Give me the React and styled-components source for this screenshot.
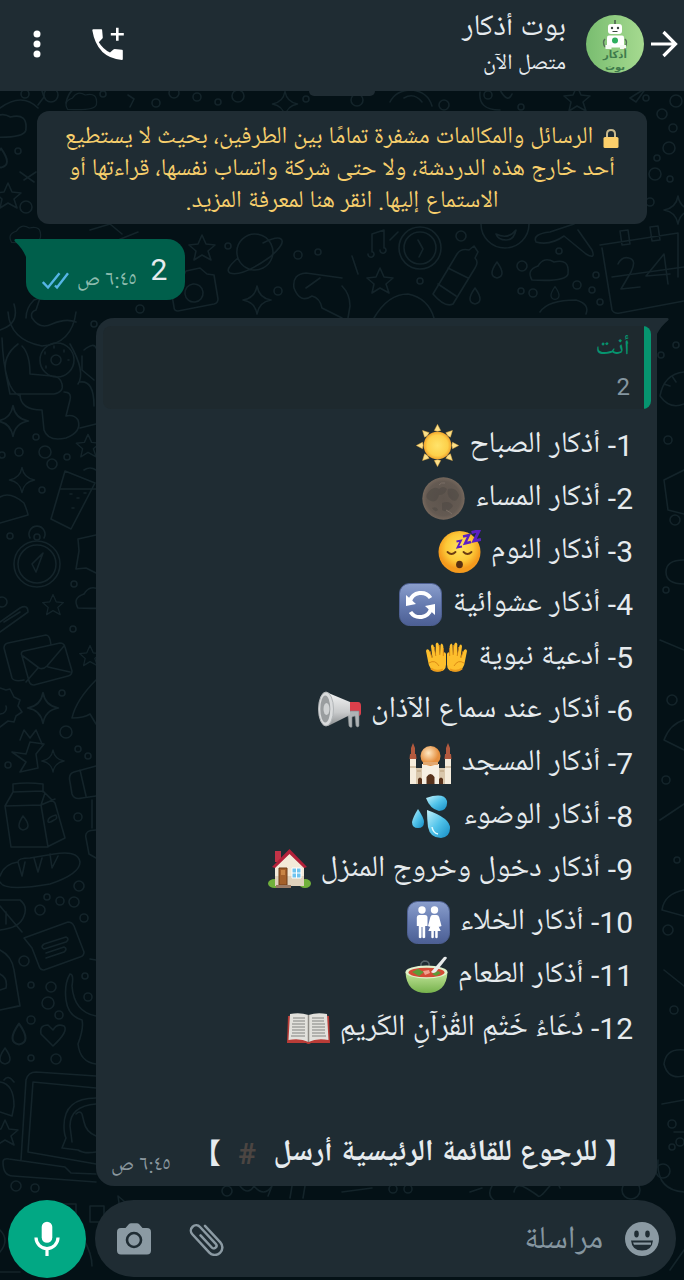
import React from "react";
import styled, { createGlobalStyle } from "styled-components";

const font = `Roboto, "Noto Naskh Arabic UI", "Noto Naskh Arabic", "Noto Sans Arabic", "DejaVu Sans", sans-serif`;

const c = {
  bar: "#1f2c33",
  wall: "#041116",
  doodle: "#14242a",
  quote: "#1e292e",
  out: "#005f4b",
  accent: "#02a884",
  quoteBar: "#06946f",
  text: "#e6ebee",
  muted: "#8596a0",
  notice: "#f7cf6c",
};

const GlobalStyle = createGlobalStyle`
  * { box-sizing: border-box; }
  body { margin: 0; background: ${c.wall}; font-family: ${font}; color: ${c.text}; }
`;

const Page = styled.div`
  position: relative;
  isolation: isolate;
  display: flex;
  flex-direction: column;
  min-height: 100vh;
  overflow: hidden;
`;

const WallpaperArt = styled.svg`
  position: absolute;
  inset: 0;
  z-index: -1;
  width: 100%;
  height: 100%;
`;

const Header = styled.header`
  display: flex;
  align-items: center;
  min-height: 91px;
  padding: 0 6px 4px 22px;
  background: ${c.bar};
`;

const IconButton = styled.button`
  display: flex;
  align-items: center;
  justify-content: center;
  flex: none;
  width: ${(p) => p.$w || 34}px;
  height: ${(p) => p.$h || 40}px;
  padding: 0;
  border: 0;
  background: none;
  color: ${(p) => p.$color || "#fff"};
  cursor: pointer;
`;

const Avatar = styled.svg`
  flex: none;
  width: 58px;
  height: 58px;
  margin-inline: 6px 20px;
`;

const Contact = styled.div`
  flex: 1;
  min-width: 0;
  padding-top: 2px;
`;

const Name = styled.h1`
  margin: 0;
  font-size: 30px;
  font-weight: 400;
  line-height: 40px;
`;

const Status = styled.p`
  margin: 0;
  font-size: 22px;
  line-height: 32px;
`;

const Actions = styled.div`
  display: flex;
  align-items: center;
  gap: 39px;
`;

const Chat = styled.main`
  flex: 1;
  display: flex;
  flex-direction: column;
`;

const DateChip = styled.div`
  align-self: center;
  width: 66px;
  height: 5px;
  border-radius: 0 0 12px 12px;
  background: ${c.bar};
`;

const Notice = styled.p`
  margin: 15px 37px 0;
  padding: 11px 20px 6px;
  border-radius: 12px;
  background: ${c.bar};
  color: ${c.notice};
  font-size: 24px;
  line-height: 32px;
  text-align: center;
`;

const NoticeLine = styled.span`
  display: block;
  white-space: nowrap;
`;

const LockIcon = styled.svg`
  width: 16px;
  height: 20px;
  margin-inline-end: 4px;
  vertical-align: -3px;
`;

const Sent = styled.section`
  position: relative;
  align-self: flex-end;
  display: flex;
  align-items: center;
  height: 61px;
  margin: 15px 0 0 26px;
  padding: 0 18px 0 16px;
  border-radius: 18px;
  border-top-left-radius: 0;
  background: ${c.out};
`;

const Tail = styled.svg`
  position: absolute;
  top: 0;
  ${(p) => (p.$side === "left" ? "left: -12px" : "right: -12px")};
  width: 13px;
  height: 18px;
`;

const Meta = styled.div`
  display: flex;
  align-items: center;
  gap: 8px;
  color: ${(p) => p.$color || "#8a979e"};
  font-size: 21px;
  line-height: 26px;
`;

const SentText = styled.p`
  margin: 0 0 0 14px;
  font-size: 30px;
  line-height: 32px;
`;

const SentMeta = styled(Meta)`
  align-self: flex-end;
  padding-bottom: 6px;
`;

const Received = styled.section`
  position: relative;
  margin: 18px 27px 0 96px;
  padding: 8px 6px 0 7px;
  border-radius: 18px;
  border-top-right-radius: 0;
  background: ${c.bar};
`;

const Quote = styled.blockquote`
  display: flex;
  height: 83px;
  margin: 0;
  border-radius: 8px;
  overflow: hidden;
  background: ${c.quote};
`;

const QuoteBar = styled.span`
  width: 7px;
  background: ${c.quoteBar};
`;

const QuoteBody = styled.div`
  padding: 4px 14px 0 0;
  font-size: 24px;
  line-height: 38px;
  color: ${c.muted};
`;

const QuoteAuthor = styled.div`
  color: ${c.quoteBar};
  font-size: 26px;
`;

const List = styled.ul`
  margin: 10px 0 0;
  padding: 0 18px 0 0;
  list-style: none;
`;

const Item = styled.li`
  display: flex;
  align-items: center;
  gap: 10px;
  height: 53px;
  line-height: 53px;
  font-size: 30px;
  white-space: nowrap;
`;

const Emoji = styled.svg`
  flex: none;
  width: 43px;
  height: 43px;
`;

const Foot = styled.div`
  display: flex;
  align-items: flex-end;
  justify-content: space-between;
  margin-top: 74px;
  padding: 0 18px 7px 8px;
`;

const FootText = styled.p`
  margin: 0;
  font-size: 30px;
  font-weight: 700;
  line-height: 50px;
  white-space: nowrap;
`;

const Bracket = styled.span`
  font-family: "Noto Sans CJK SC", sans-serif;
  font-size: 28px;
  line-height: 32px;
`;

const Hash = styled.span`
  margin-inline: 10px;
  color: #4b4542;
`;

const Composer = styled.form`
  display: flex;
  align-items: flex-start;
  gap: 9px;
  margin-top: 14px;
  padding: 0 8px 2px;
`;

const Field = styled.div`
  flex: 1;
  min-width: 0;
  display: flex;
  align-items: center;
  height: 77px;
  padding: 0 17px 0 22px;
  border-radius: 39px;
  background: ${c.bar};
`;

const TextInput = styled.input`
  flex: 1;
  min-width: 0;
  height: 60px;
  margin: 0;
  padding: 4px 21px 0;
  border: 0;
  outline: 0;
  background: none;
  color: ${c.text};
  font: 400 32px ${font};
  &::placeholder { color: ${c.muted}; opacity: 1; }
`;

const MicButton = styled(IconButton)`
  border-radius: 50%;
  background: ${c.accent};
`;

const FieldActions = styled.div`
  display: flex;
  gap: 38px;
`;

/* ---------- wallpaper ---------- */

const star = "M0-13 4-4 13-3 6 3 9 12 0 7-8 12-6 3-13-3-4-4Z";
const spark = "M0-14Q2-2 14 0 2 2 0 14-2 2-14 0-2-2 0-14Z";
const drop = "M0-8Q10 6 0 8-10 6 0-8Z";
const cloud = "M-18 8Q-24-2-12-6-6-16 4-10 20-14 18 2 16 10-18 8Z";
const heart = "M0 11-12-1Q-14-10-5-10L0-5Q4-12 11-9 16-4 0 11Z";

const shapes = [
  [star, 8, 196, 1], [star, 202, 248, 1], [star, 380, 281, 1], [star, 577, 99, 1], [star, 53, 605, 0.8],
  [star, 88, 446, 0.9], [star, 5, 1133, 1], [star, 90, 656, 0.8],
  [spark, 257, 300, 1], [spark, 13, 421, 1.1], [spark, 43, 708, 1.1], [spark, 53, 761, 0.8], [spark, 678, 210, 1],
  [spark, 285, 104, 0.9], [spark, 22, 480, 0.9],
  [drop, 497, 270, 1], [drop, 475, 296, 1], [drop, 555, 293, 0.8], [drop, 19, 1034, 1.3], [drop, 5, 1056, 1], [drop, 1, 158, 1.2],
  [cloud, 550, 272, 1], [cloud, 82, 103, 0.8], [cloud, 6, 128, 1.1], [cloud, 96, 600, 1], [cloud, 26, 236, 0.8],
  [heart, 53, 1035, 1],
];

const rings = [
  [25, 94, 4], [51, 95, 7], [103, 94, 3], [156, 103, 4], [174, 93, 5], [197, 97, 4], [218, 102, 3], [238, 96, 6],
  [306, 99, 3], [357, 100, 6], [444, 105, 5], [488, 95, 4], [521, 107, 3], [646, 98, 3], [676, 101, 6],
  [662, 114, 5], [673, 128, 4], [669, 148, 6], [657, 158, 3], [655, 174, 6], [670, 179, 3], [650, 202, 4],
  [26, 207, 6], [18, 151, 3], [228, 246, 3], [298, 255, 4], [318, 252, 3], [278, 291, 4], [140, 309, 4], [94, 324, 3],
  [461, 236, 5], [559, 251, 3], [522, 266, 5], [420, 281, 3], [521, 291, 3], [533, 293, 4], [577, 285, 4], [596, 275, 3],
  [600, 302, 3], [592, 290, 3], [36, 437, 3], [45, 452, 6], [19, 452, 4], [52, 464, 5], [67, 457, 3], [42, 490, 3],
  [2, 455, 3], [10, 536, 3], [2, 602, 5], [74, 584, 3], [73, 629, 3], [62, 693, 3], [66, 732, 6], [8, 765, 3],
  [78, 749, 3], [88, 756, 3], [78, 817, 4], [79, 886, 5], [74, 902, 5], [60, 901, 4], [47, 897, 3], [40, 910, 5],
  [84, 918, 4], [24, 961, 5], [31, 985, 3], [51, 987, 5], [48, 1003, 6], [59, 1015, 4], [31, 1020, 4], [31, 1058, 3],
  [56, 1059, 5], [85, 976, 3], [88, 997, 4], [16, 1186, 5], [35, 1188, 4], [227, 1191, 5], [393, 1189, 4], [408, 1189, 4],
  [672, 1124, 4], [680, 1142, 4], [663, 1171, 7], [672, 1147, 3], [661, 355, 3], [676, 345, 3], [668, 440, 4],
  [675, 520, 5], [666, 590, 3], [672, 700, 5], [666, 780, 4], [677, 860, 3], [668, 930, 5], [674, 1010, 4], [631, 1190, 9],
];

const lines = [
  /* planet and ring */
  "M237 254a18 18 0 1 1 34 6a18 18 0 0 1-34-6M238 258q-14 12-8 15 12 4 40-16 16-14 11-18-4-3-18 4",
  /* camera */
  "M170 284l12-5 4-8 14-3 7 6 7 1 4 24q0 4-4 5l-36 7q-4 0-4-4z", "M185 294a9 9 0 1 0 18-2a9 9 0 1 0-18 2",
  /* leaf and guitar */
  "M294 288q-2-14 12-15l36 5M294 288q6 16 18 8 8 2 10 12l20 10M306 288l14-10M118 240l20-8M90 230l20-6 12 10",
  /* music notes */
  "M372 252v-18l12-4v18M368 254a3 3 0 1 0 5-2M380 250a3 3 0 1 0 5-2",
  /* clock */
  "M399 248a21 21 0 1 0 42 0a21 21 0 1 0-42 0M404 248a16 16 0 1 0 32 0a16 16 0 1 0-32 0M418 240l5 9-4 8",
  /* bottle */
  "M433 294l24-40q4-6 12-4l5-4 4 6-3 6q4 4 0 10l-22 36q-8 4-20-10zM448 268l20 10M438 284l18 12",
  /* laughing face */
  "M481 224a24 24 0 0 0 48 0M496 234q12 6 20-4-2 10-10 10-8 0-10-6z",
  /* plane */
  "M536 242q-4-8 14-10l24-8M536 242q14 4 28-6l22 18q10 6 6-4l-14-20",
  /* calendar */
  "M600 245l78-12v44M602 248l10 62q2 4 8 3l64-12M612 277l72-10M620 231l8-1 2 14-8 1zM650 227l8-1 2 14-8 1z",
  "M618 264q4-8 11-6 8 2 2 14l-10 17 19-2M668 284l-4-30-18 22 24-2",
  /* hills and hats over the bubble */
  "M374 318q14-24 34-24 20 4 26 24M540 312q8-12 36-12 14 4 10 14M342 286q8 8 8 20l-2 12M352 256l6 18M398 232l-8 8",
  /* bear */
  "M8 312q2 28 34 34 30-2 34-34M0 330q20-6 14-26M26 318q0-10 8-18l6-2-4 12q-6 2-4 8 8 12 20 6 14-6 24-2",
  "M40 360a17 17 0 1 0 34 0a17 17 0 1 0-34 0M51 360a5 5 0 1 0 10 0a5 5 0 1 0-10 0M45 352v2M54 346v2M64 350v2M68 360h1M46 366v2",
  "M18 344q-16 12-12 30l4 20 44 0q10-2 8-10-2-8-10-8l-22-2q0-20-8-28M2 338q2 52 18 58M20 394q0 16 22 16l2 20q4 12 22 8 16-6 12-18-4-6-12-4l4-16q2-8-6-8",
  "M70 344q16 28 8 40M80 382q14-2 14 24M84 350q10-8 12-2M82 356v14l12 10M80 428l16-4",
  /* cup */
  "M65 471 51 519l20 10 24-46zM60 489h36M70 494h2M77 498h2M84 493h2M72 508h2M84 470q6-4 12 0",
  /* compass */
  "M14 564a23 23 0 1 0 46 0a23 23 0 1 0-46 0M18 564a19 19 0 1 0 38 0a19 19 0 1 0-38 0M43 553 36 572 32 564zM30 538a8 8 0 1 1 14 0",
  "M34 537a3 3 0 1 0 6 0a3 3 0 1 0-6 0M0 497q10-6 24 6 4 10 4 12l-28 8",
  /* puzzle, cloud */
  "M96 535l-18 4 1 12-3 18 10-1 10 5M0 622l20-14q8-4 8 4l-28 20M4 622l16-10",
  /* envelopes */
  "M4 648q0-4 4-5l38-8q4 0 5 10M4 648l8 30q2 4 12 2M22 656q-2-4 2-5l36-8q4 0 5 4l7 24q0 4-4 5l-34 9q-4 0-5-4zM23 656l16 12q4 2 8-2l17-20M26 682l12-14M70 672l-22-5",
  /* gear, rocket */
  "M0 688l6 2 4-1 4 8 6 3-2 6 4 6-6 4-2 6-6-1-8 6M6 706a6 6 0 0 1-6 8M96 680q-20 20-24 38 12 0 18-4l6 10M20 740l4-10 6 8 6-8 6 14",
  /* windmill, robot */
  "M12 752l14 2 4-12 14 2-8 10 2 14-18 4 6-10zM96 766l-22 6q-6 2-4 10l2 12q2 6 10 4l14-2M80 770l6 26M96 830q-12 0-10 8l3 16 7 4M92 800v28",
  /* milk carton */
  "M5 806l8-14 30-1 12 12 10 35-18 9-36 0zM5 806l36-1 14-6M41 805l7 42M13 792v-8q14-2 30 0v8M41 805l4-12M48 821q0-4 8-6 2 4-2 5-6 4-6 1M23 816q10 12 0 14-8-2 0-14",
  /* bread */
  "M0 876q4-12 18-14 0-4 12-4l24-4q24-4 26 8 0 12-30 22-46 8-50-2M18 862l4 14 3-14M34 858l4 14 4-14M50 854l2 14 6-12",
  /* fish */
  "M0 900l20 0q8 6 4 16-4 12-24 14M0 906l22 26M6 924l0-12",
  /* ticket */
  "M24 938l44-16q4 0 6 4l10 26q0 4-4 5l-36 13q-4 0-5-4l-7-18zM44 944l22-7q4 2 0 5l-22 7q-4-2 0-5M46 953l18-6q4 2 0 5l-18 6",
  /* jar, boot */
  "M0 950q12 6 14 20l6 36-20 4M0 1010l18-4M0 974q8 4 6 14l-6 2M70 974q-6 10-4 26 2 16 16 20 2 8-4 24 2 18 18 20M70 974q4 0 2 12 2 26 24 30M96 960l-6-1",
  /* laptop */
  "M21 1160l5-80q2-8 10-8l60 4M28 1152l5-70 63 6M28 1152l68 12M3 1162q0-4 6-3l56 8 6 6 25 1M3 1162q0 14 10 14l83 6",
  "M96 1098q-32 0-32 28 0 8 2 12l-4 10 16 2q6 4 18 2M96 1104q-26 2-26 22l2 16M76 1114q4-4 6 0l2 8q2 10 12 14",
  "M0 1082q14 2 14 24l-2 10-12-4M4 1080q4-6 10 2",
  /* details under the bubble and around the composer */
  "M60 1204h16v18H60zM90 1206h14v16H90zM118 1196l14 12-12 2zM240 1186q8 10 14 0 10 12 18 0l-4 10M290 1198l2-12M303 1198l2-12M342 1192l30-4M470 1192l12-4M492 1186q-6 10 4 16M514 1192q2-10 12-4t12 8 10-8 12 0",
  "M658 1160q-2 30 26 32M684 1132h-10M662 1104l22-4M0 1230q10 10 0 22M84 1240q8 14 8 26M0 1272h20M670 1270l14-20",
  /* right margin */
  "M684 372q-20 2-24 24 10 14 24 8M664 384l6 2M672 376l4 6M684 470l-20 10 4 30 16 4M684 560q-18 0-18 12t18 12M660 640l24 10M684 720q-14 4-20 20l20 10M660 820l24-16M684 890q-20 4-22 20l22 6M664 970l20 16M684 1050q-18-2-20 14 4 16 20 12",
  "M38 105l6-8-2-6 12-6M66 103q2-10 8-14l16-2M20 172l14 10M24 180l12-8M0 108q22-16 38 0M130 107l4-8-6-4M390 102q6-12 22-12 16 2 20 16M404 98q10-6 18 4M480 92q-2 18 20 18M500 90q8 14 12 4M630 98l16-10-10 14z",
];

function Wallpaper() {
  return (
    <WallpaperArt viewBox="0 0 684 1280" preserveAspectRatio="xMidYMin slice" aria-hidden="true">
      <g fill="none" stroke={c.doodle} strokeWidth="1.6" strokeLinejoin="round" strokeLinecap="round">
        {shapes.map(([d, x, y, s], i) => (
          <path key={i} d={d} transform={`translate(${x} ${y}) scale(${s})`} />
        ))}
        {rings.map(([x, y, r], i) => (
          <circle key={i} cx={x} cy={y} r={r} />
        ))}
        {lines.map((d, i) => (
          <path key={i} d={d} />
        ))}
      </g>
    </WallpaperArt>
  );
}

/* ---------- emoji ---------- */

const Sun = () => (
  <>
    <defs>
      <radialGradient id="sun"><stop offset="0" stopColor="#ffe36a" /><stop offset=".75" stopColor="#fdd04a" /><stop offset="1" stopColor="#f2a52c" /></radialGradient>
    </defs>
    {[0, 45, 90, 135, 180, 225, 270, 315].map((a) => (
      <path key={a} d="M18.300 6.500 21.500.4l3.200 6.100q-3.200 1.400-6.400 0z" fill="#fbe08a" stroke="#e9b144" strokeWidth=".5" transform={`rotate(${a} 21.5 21.5)`} />
    ))}
    <circle cx="21.500" cy="21.500" r="13.800" fill="url(#sun)" />
  </>
);

const Moon = () => (
  <>
    <defs>
      <radialGradient id="moon"><stop offset="0" stopColor="#5d544d" /><stop offset=".8" stopColor="#645a52" /><stop offset="1" stopColor="#75675c" /></radialGradient>
    </defs>
    <circle cx="21.500" cy="21.500" r="21.200" fill="url(#moon)" />
    <path d="M5 17q6-9 12-5 4-4 8 0-2 6-8 6-2 8-8 6-6-2-4-7zM26 12q8-2 11 6-2 8-7 5-6-4-4-11zM20 26q8-3 11 3-5 8-11 4zM10 31q5-2 6 2-3 3-6-2z" fill="#4a4541" opacity=".45" />
    <path d="M24 33q4 2 6 4M17 8q2-3 6-2" stroke="#7b6f66" fill="none" />
  </>
);

const Sleep = () => (
  <>
    <defs>
      <radialGradient id="face" cy=".4"><stop offset="0" stopColor="#ffe45e" /><stop offset=".65" stopColor="#fdc938" /><stop offset="1" stopColor="#f49a1d" /></radialGradient>
    </defs>
    <circle cx="21.500" cy="22" r="21" fill="url(#face)" />
    <g fill="none" stroke="#6b3c12" strokeWidth="1.800" strokeLinecap="round"><path d="M9.500 22q4 4 8 0M25.500 22q4 4 8 0" /></g>
    <ellipse cx="21.500" cy="34.500" rx="3.400" ry="3.800" fill="#593011" />
    <g fill="none" stroke="#5b1fc4" strokeLinejoin="miter"><path d="M18.500 11.500 23 10.500 19.500 17.500 24 16.500" strokeWidth="1.800" /><path d="M25 6.500 31 5 27 13.500 33 12" strokeWidth="2.400" /><path d="M33.500 2.500 41 .8 36 11 43 9.500" strokeWidth="3" /></g>
  </>
);

const BlueTile = ({ id }) => (
  <>
    <defs>
      <linearGradient id={id} x2="0" y2="1"><stop offset="0" stopColor="#8b9fcd" /><stop offset=".5" stopColor="#667bb0" /><stop offset="1" stopColor="#4c5f94" /></linearGradient>
    </defs>
    <rect x=".5" y=".5" width="42" height="42" rx="10" fill={`url(#${id})`} stroke="#4e6092" />
  </>
);

const Cycle = () => (
  <>
    <BlueTile id="t1" />
    <g fill="none" stroke="#fff" strokeWidth="4"><path d="M11 18a11.500 11.500 0 0 1 20.500-3" /><path d="M32 26a11.500 11.500 0 0 1-20.500 3" /></g>
    <path d="M7 12v11l10-2zM36 32V21l-10 2z" fill="#fff" />
  </>
);

const Restroom = () => (
  <>
    <BlueTile id="t2" />
    <g fill="#fff">
      <circle cx="15" cy="9" r="3.700" /><circle cx="27.500" cy="9" r="3.700" />
      <path d="M12 14h6q2.500 0 2.500 2.500V25h-2.300v11.500q-1.300 1.500-2.700 0V26h-1v10.500q-1.300 1.500-2.700 0V25H9.800v-8.500Q9.800 14 12 14z" />
      <path d="M25.500 14h4q2 0 2.700 2.300L34.500 25l-2 .8h-.8l2 4.200h-3v6.500q-1.200 1.500-2.500 0V30h-1.400v6.500q-1.200 1.500-2.500 0V30h-3l2-4.200h-.8l-1.500-.8 2.300-8.700q.600-2.300 2.200-2.300z" />
    </g>
  </>
);

const Palms = () => {
  const hand = (
    <>
      <path d="M21 18Q20 15 18.500 17L18.300 10Q17 5.500 15.500 9L15 19 13.700 8Q12 5 10.700 8L11 20 8.500 9.500Q6.500 7 6 10.500L7.500 22 4 14Q1.500 12 1 15L3 25q1 10 9 10.500 9 .500 9-7z" fill="#fdbf2d" />
      <path d="M10.800 20 9.500 11M14.800 19 14.400 9M18.300 20l.1-8M7 22 5 15M4 27q6-4 10 3" fill="none" stroke="#d98412" strokeWidth=".9" />
      <path d="M6 32.500q5 4 12 1" stroke="#ec9c1c" strokeWidth="2" fill="none" />
    </>
  );
  return (
    <>
      {hand}
      <g transform="translate(43 0) scale(-1 1)">{hand}</g>
    </>
  );
};

const Horn = () => (
  <>
    <defs>
      <linearGradient id="horn" x2="0" y2="1"><stop offset="0" stopColor="#f4f5f5" /><stop offset=".6" stopColor="#c8cacb" /><stop offset="1" stopColor="#8b8e90" /></linearGradient>
    </defs>
    <path d="M30 13h10q3 0 3 4v7q0 3-3 3H30z" fill="#dd3f4b" />
    <path d="M30 27l1 10q1 2 3 1V28l3-1 1 10q2 2 3 0V22h-9z" fill="#aeb3b5" stroke="#7e8486" strokeWidth=".6" />
    <path d="M8 3l24 10v13L10 37z" fill="url(#horn)" />
    <ellipse cx="8" cy="20" rx="7.500" ry="17" fill="#dadcdd" stroke="#b1b5b7" />
    <ellipse cx="7.300" cy="20" rx="5" ry="13.500" fill="#999d9f" />
    <ellipse cx="8.500" cy="20" rx="3" ry="6" fill="#cfd2d3" />
  </>
);

const Mosque = () => (
  <>
    <defs>
      <radialGradient id="dome" cx=".4" cy=".35"><stop offset="0" stopColor="#ffe9c4" /><stop offset="1" stopColor="#e58f3f" /></radialGradient>
    </defs>
    <path d="M1 15h6v27H1zM36 15h6v27h-6z" fill="#f5ecdc" />
    <path d="M7 26h29v16H7z" fill="#d9c7ac" /><path d="M13 22h17v20H13z" fill="#f6efe2" />
    <path d="M2 6 4 1l2 5v6h1l.5 5H.5L1 12h1zM37 6l2-5 2 5v6h1l.5 5h-7l.5-5h1z" fill="#b2593e" />
    <circle cx="21.500" cy="14" r="10" fill="url(#dome)" />
    <path d="M14 20h15v3H14z" fill="#e2a870" />
    <path d="M17.500 42v-7q4-6 8 0v7zM9 42v-5q2-3 4 0v5zM30 42v-5q2-3 4 0v5z" fill="#58321b" />
    <path d="M1 25h6M36 25h6M8 29h4M31 29h4" stroke="#b79c79" />
  </>
);

const Drops = () => (
  <>
    <defs>
      <linearGradient id="drop" x2="1" y2="1"><stop offset="0" stopColor="#c5f2fb" /><stop offset=".5" stopColor="#51c3ea" /><stop offset="1" stopColor="#158cc4" /></linearGradient>
    </defs>
    <path d="M16 3Q34-3 37 6q1 9-8 10Q20 14 16 3z" fill="url(#drop)" />
    <path d="M17 15q23 8 23 18 0 9-9 10-11 0-13-11-1-8-1-17z" fill="url(#drop)" />
    <path d="M8 14q6 9 6 13 0 6-6 6t-6-6q1-5 6-13z" fill="url(#drop)" />
    <path d="M22 32q1 6 6 7" stroke="#e0fbff" strokeWidth="1.500" fill="none" />
  </>
);

const House = () => (
  <>
    <ellipse cx="7" cy="35.500" rx="7" ry="4.500" fill="#71b13c" /><ellipse cx="37" cy="35.500" rx="6" ry="4.500" fill="#71b13c" />
    <path d="M7 3h6v11H7z" fill="#c23347" />
    <path d="M7 18 22 4l14 14v20H7z" fill="#f3ead9" /><path d="M7 28h29v10H7z" fill="#dfd2bd" />
    <path d="M4 19 21.500 1 39 19l-3 1L21.500 6 7 20z" fill="#b3213a" />
    <path d="M11 20h8v17h-8z" fill="#a4602a" stroke="#6e3d18" /><path d="M13 22h4v5h-4z" fill="#c98545" />
    <path d="M24 20h9v10h-9z" fill="#70c4ef" stroke="#fff" /><path d="M28.500 20v10M24 25h9" stroke="#fff" />
    <path d="M8 37h15v3H8z" fill="#9a7a65" />
  </>
);

const Bowl = () => (
  <>
    <defs>
      <linearGradient id="bowl" x2="0" y2="1"><stop offset="0" stopColor="#c3e59b" /><stop offset="1" stopColor="#76b24c" /></linearGradient>
    </defs>
    <path d="M17 14q-3-5 2-7 6 0 5 5" stroke="#58656b" strokeWidth="1.500" fill="none" />
    <path d="M.5 18q1 21 21 21t21-21z" fill="url(#bowl)" />
    <ellipse cx="21.500" cy="18" rx="21" ry="6.500" fill="#e1f2cd" /><ellipse cx="21.500" cy="18.500" rx="18" ry="4.800" fill="#d34a35" />
    <path d="M7 18l6-3 6 3-5 4zM27 20l6-3 3 2-5 3z" fill="#5d9b37" /><path d="M18 17l6-1 1 3-5 2z" fill="#f0a08d" />
    <path d="M26 18 39 3q2-1 3 1L31 18q-3 2-5 0z" fill="#e8ebeb" />
  </>
);

const Book = () => (
  <>
    <path d="M1 9h41l1 27H24q-2.500 2-5 0H0z" fill="#b93c37" />
    <path d="M3 7q10-2 18.500 1Q30 5 40 7l1.500 26q-12-2-20 2-8-4-20-2z" fill="#e2e1dc" />
    <path d="M21.500 8v27" stroke="#8f8c86" strokeWidth="1.500" />
    <path d="M6 11h12M6 14h12M5 17h13M5 20h13M5 23h13M5 26h13M4 29h14M25 11h12M25 14h12M25 17h13M25 20h13M25 23h13M25 26h13M25 29h14" stroke="#a3a29e" strokeWidth="1.600" />
  </>
);

const items = [
  ["1", "أذكار الصباح", Sun],
  ["2", "أذكار المساء", Moon],
  ["3", "أذكار النوم", Sleep],
  ["4", "أذكار عشوائية", Cycle],
  ["5", "أدعية نبوية", Palms],
  ["6", "أذكار عند سماع الآذان", Horn],
  ["7", "أذكار المسجد", Mosque],
  ["8", "أذكار الوضوء", Drops],
  ["9", "أذكار دخول وخروج المنزل", House],
  ["10", "أذكار الخلاء", Restroom],
  ["11", "أذكار الطعام", Bowl],
  ["12", "دُعَاءُ خَتْمِ القُرْآنِ الكَريمِ", Book],
];

export default function App() {
  return (
    <Page dir="rtl" lang="ar">
      <GlobalStyle />
      <Wallpaper />
      <Header>
        <IconButton aria-label="رجوع" $w={28}>
          <svg width="28" height="28" viewBox="0 0 28 28" fill="none" stroke="currentColor" strokeWidth="3.200">
            <path d="M1 14h24.500M13.500 2l12 12-12 12" />
          </svg>
        </IconButton>
        <Avatar viewBox="0 0 58 58" role="img" aria-label="بوت أذكار">
          <defs>
            <linearGradient id="av"><stop offset="0" stopColor="#79bd70" /><stop offset="1" stopColor="#a6da90" /></linearGradient>
          </defs>
          <circle cx="29" cy="29" r="29" fill="url(#av)" />
          <path d="M29 5v5" stroke="#45584a" strokeWidth="1.500" />
          <path d="M19 24q-3 3 0 8M39 24q3 3 0 8" stroke="#547058" fill="none" strokeWidth="1.500" />
          <rect x="22" y="9" width="14" height="10" rx="3" fill="#fff" />
          <rect x="21" y="20.500" width="17" height="12" rx="2" fill="#fff" />
          <path d="M19.500 30h6v4h-6zM34 30h6v4h-6z" fill="#f4faf3" />
          <circle cx="26" cy="13" r="1.200" fill="#39463f" /><circle cx="32" cy="13" r="1.200" fill="#39463f" />
          <path d="M26.500 16.500h5" stroke="#39463f" />
          <circle cx="29" cy="25.500" r="3" fill="#2fae5f" />
          <g fill="#3f7a4c" fontFamily="DejaVu Sans, sans-serif" fontSize="10" fontWeight="700" textAnchor="middle"><text x="29" y="43">أذكار</text><text x="29" y="55">بوت</text></g>
        </Avatar>
        <Contact>
          <Name>بوت أذكار</Name>
          <Status>متصل الآن</Status>
        </Contact>
        <Actions>
          <IconButton aria-label="مكالمة">
            <svg width="34" height="34" viewBox="0 0 34 34">
              <path fill="currentColor" d="M2.300 2.300H10.500Q11 2.300 11.100 2.800L11.800 10.500Q11.800 11.200 11.400 11.600L7.800 15.200Q12 22 19 25.600L22.400 22.400Q23 22 23.600 22L31 22.800Q31.800 23 31.800 23.700V32Q31.800 33 31 33Q6 31 1.300 3.300Q1.300 2.300 2.300 2.300Z" />
              <path stroke="currentColor" strokeWidth="2.600" d="M26.300 .8v13M19.800 7.300h13" />
            </svg>
          </IconButton>
          <IconButton aria-label="المزيد" $w={30}>
            <svg width="8" height="28" viewBox="0 0 8 28" fill="currentColor">
              <circle cx="4" cy="4" r="3.500" /><circle cx="4" cy="14" r="3.500" /><circle cx="4" cy="24" r="3.500" />
            </svg>
          </IconButton>
        </Actions>
      </Header>
      <Chat>
        <DateChip />
        <Notice>
          <NoticeLine>
            <LockIcon viewBox="0 0 16 20">
              <path d="M4 9V5q0-4 4-4t4 4v4" fill="none" stroke="#c9b98c" strokeWidth="2" />
              <rect x=".5" y="8" width="15" height="11" rx="1.500" fill="#fdd06b" />
            </LockIcon>{" "}
            الرسائل والمكالمات مشفرة تمامًا بين الطرفين، بحيث لا يستطيع
          </NoticeLine>
          <NoticeLine>أحد خارج هذه الدردشة، ولا حتى شركة واتساب نفسها، قراءتها أو</NoticeLine>
          <NoticeLine>الاستماع إليها. انقر هنا لمعرفة المزيد.</NoticeLine>
        </Notice>
        <Sent>
          <Tail $side="left" viewBox="0 0 13 18"><path d="M13 0H1.500Q-.5 1 1 2.500Q9 10 12 18h1z" fill={c.out} /></Tail>
          <SentText>2</SentText>
          <SentMeta $color="#8dbcae">
            <span>٦:٤٥ ص</span>
            <svg width="27" height="18" viewBox="0 0 27 18" fill="none" stroke="#55b5e5" strokeWidth="2.400">
              <path d="M.8 10 6 15.500 17.500 1.200M13 13.500l2 2L26 1.200" />
            </svg>
          </SentMeta>
        </Sent>
        <Received>
          <Tail $side="right" viewBox="0 0 13 18"><path d="M0 0h11.500q2 1 .5 2.500Q5 8 1 16H0z" fill={c.bar} /></Tail>
          <Quote>
            <QuoteBar />
            <QuoteBody>
              <QuoteAuthor>أنت</QuoteAuthor>
              <div>2</div>
            </QuoteBody>
          </Quote>
          <List>
            {items.map(([n, label, Art]) => (
              <Item key={n}>
                <span>{n}- {label}</span>
                <Emoji viewBox="0 0 43 43" aria-hidden="true"><Art /></Emoji>
              </Item>
            ))}
          </List>
          <Foot>
            <FootText>
              <Bracket>【</Bracket> للرجوع للقائمة الرئيسية أرسل <Hash>#</Hash> <Bracket>】</Bracket>
            </FootText>
            <Meta>٦:٤٥ ص</Meta>
          </Foot>
        </Received>
      </Chat>
      <Composer onSubmit={(e) => e.preventDefault()}>
        <Field>
          <IconButton type="button" aria-label="رموز تعبيرية" $color="#8b9aa3" $w={35}>
            <svg width="34" height="34" viewBox="0 0 34 34">
              <circle cx="17" cy="17" r="17" fill="currentColor" />
              <g fill={c.bar}><ellipse cx="11.500" cy="12" rx="2.300" ry="3.400" /><ellipse cx="22.500" cy="12" rx="2.300" ry="3.400" /><path d="M6 18.500h22q-1 10-11 10t-11-10z" /></g>
              <path d="M8 20.500h18v2.300H9z" fill="currentColor" />
            </svg>
          </IconButton>
          <TextInput aria-label="مراسلة" placeholder="مراسلة" />
          <FieldActions>
            <IconButton type="button" aria-label="إرفاق" $color="#8b9aa3" $w={36}>
              <svg width="36" height="34" viewBox="-18 -17 36 34" fill="none" stroke="currentColor" strokeWidth="2.500" strokeLinecap="round">
                <path transform="rotate(-43)" d="M7.500 -11V11.500a7.500 7.500 0 0 1-15 0V-13.500a5.300 5.300 0 0 1 10.600 0V9.500a2.700 2.700 0 0 1-5.400 0V-7" />
              </svg>
            </IconButton>
            <IconButton type="button" aria-label="الكاميرا" $color="#8b9aa3">
              <svg width="34" height="32" viewBox="0 0 34 32">
                <path fill="currentColor" d="M4 5h4.500L12 1q.8-.8 2-.8h6q1.200 0 2 .8l3.500 4H30q4 0 4 4v18.500q0 4-4 4H4q-4 0-4-4V9q0-4 4-4z" />
                <circle cx="17" cy="17" r="7" fill="none" stroke={c.bar} strokeWidth="2.600" />
              </svg>
            </IconButton>
          </FieldActions>
        </Field>
        <MicButton type="button" aria-label="تسجيل صوتي" $w={78} $h={78}>
          <svg width="26" height="36" viewBox="0 0 26 36">
            <rect x="7.700" y=".8" width="10.600" height="21" rx="5.300" fill="currentColor" />
            <path d="M2 16.500a11 11 0 0 0 22 0M13 27v8" fill="none" stroke="currentColor" strokeWidth="3.200" />
          </svg>
        </MicButton>
      </Composer>
    </Page>
  );
}
